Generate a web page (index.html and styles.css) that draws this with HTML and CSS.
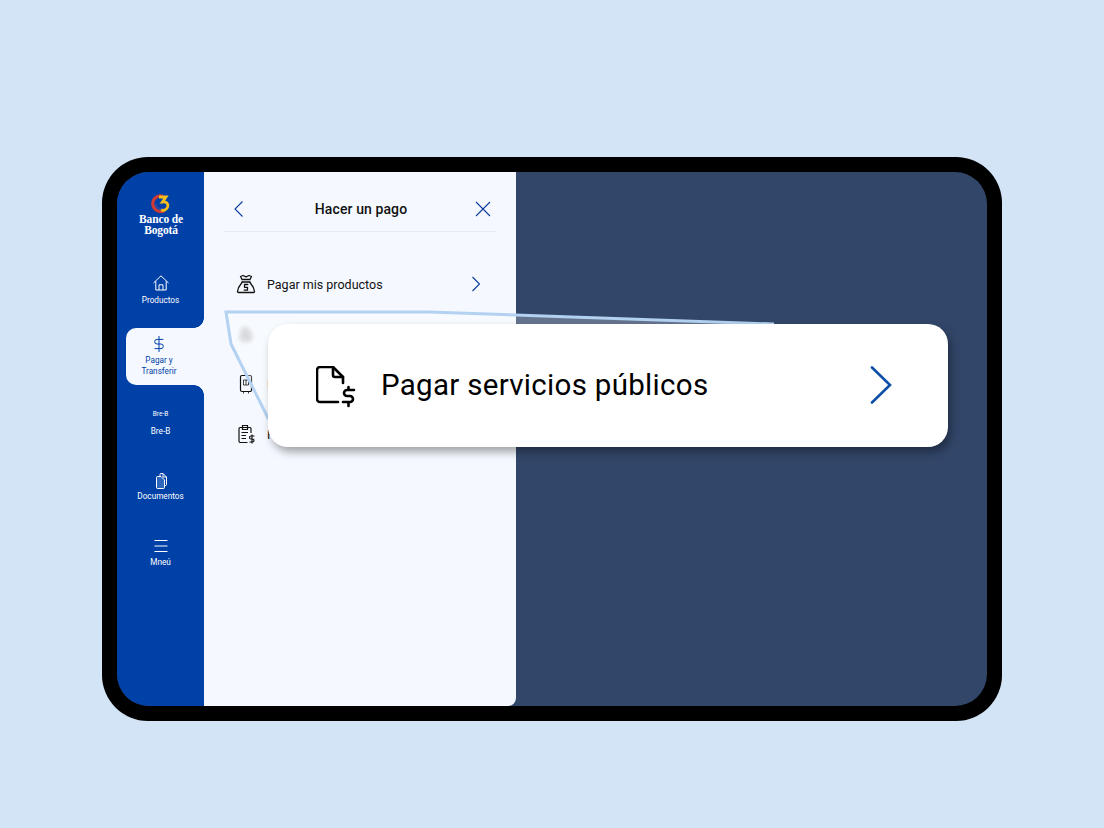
FILE: index.html
```html
<!DOCTYPE html>
<html lang="es">
<head>
    <meta charset="UTF-8">
    <meta name="viewport" content="width=device-width, initial-scale=1.0">
    <title>Hacer un pago</title>
    <link rel="stylesheet" href="styles.css">
</head>
<body>
    <div class="device">
        <div class="screen">
            <!-- Sidebar -->
            <aside class="sidebar">
                <div class="logo">
                    <svg width="20" height="20" viewBox="0 0 20 20" fill="none">
                        <path d="M12 2.2C6.500 0.800 1.800 4.500 1.800 9.500C1.800 14.800 7 18.800 13 17" stroke="#cf3a34" stroke-width="3.2"/>
                        <path d="M4.500 10C5 14 9 16.500 14 14.500" stroke="#2b4aa0" stroke-width="2.4"/>
                        <path d="M8 3H15L11.500 8C15 7.500 17.500 9.500 16.800 12.500C16 16 12.500 17 10 16" stroke="#f4bd1c" stroke-width="2.800"/>
                    </svg>
                    <div class="logo-text">Banco de<br>Bogotá</div>
                </div>
                <nav class="nav">
                    <a class="nav-item first">
                        <svg class="nav-icon" viewBox="0 0 18 18" fill="none" stroke="currentColor" stroke-width="1">
                            <path d="M1.500 9 9 1.800 16.500 9M3.800 7.200V16H14.200V7.200M7 16V10.800H11V16"/>
                        </svg>
                        <span class="nav-label">Productos</span>
                    </a>
                    <a class="nav-item active">
                        <svg class="nav-icon" viewBox="0 0 18 18" fill="none" stroke="currentColor" stroke-width="1">
                            <path d="M13.400 4.400H7A2.300 2.300 0 0 0 7 9H11A2.300 2.300 0 0 1 11 13.600H4.600M9 1V17"/>
                        </svg>
                        <span class="nav-label">Pagar y<br>Transferir</span>
                    </a>
                    <a class="nav-item">
                        <span class="bre-mark">Bre-B</span>
                        <span class="nav-label">Bre-B</span>
                    </a>
                    <a class="nav-item far docs">
                        <svg class="nav-icon" viewBox="0 0 18 18" fill="none" stroke="currentColor" stroke-width="1">
                            <path d="M8 4V2.500A1 1 0 0 1 9 1.500H11L14.500 5V12.500A1 1 0 0 1 13.500 13.500H12.500M11 1.500V5H14.500"/>
                            <path d="M5.500 4.500H9L12.500 8V15.500A1 1 0 0 1 11.500 16.500H5.500A1 1 0 0 1 4.500 15.500V5.500A1 1 0 0 1 5.500 4.500Z" fill="#2f66bd"/>
                        </svg>
                        <span class="nav-label">Documentos</span>
                    </a>
                    <a class="nav-item far">
                        <svg class="nav-icon" viewBox="0 0 18 18" fill="none" stroke="currentColor" stroke-width="1">
                            <path d="M2.500 3.500H15.500M2.500 9H15.500M2.500 14.500H15.500"/>
                        </svg>
                        <span class="nav-label">Mneú</span>
                    </a>
                </nav>
            </aside>

            <!-- Payment panel -->
            <section class="panel">
                <header class="panel-header">
                    <svg class="head-icon" viewBox="0 0 16 16" fill="none" stroke="#0b3c9c" stroke-width="1.100">
                        <path d="M11.500 0.500 4 8 11.500 15.500"/>
                    </svg>
                    <h2>Hacer un pago</h2>
                    <svg class="head-icon" viewBox="0 0 16 16" fill="none" stroke="#0b3c9c" stroke-width="1.100">
                        <path d="M1 1 15 15M15 1 1 15"/>
                    </svg>
                </header>
                <ul class="pay-list">
                    <li class="pay-row">
                        <svg class="pay-icon" viewBox="0 0 20 20" fill="none" stroke="#111" stroke-width="1.300" stroke-linejoin="round">
                            <path d="M4.500 2.500 7 1.500 10 2.800 13 1.500 15.500 2.500 14 5.500H6ZM5.500 5.500H14.500M5.500 8H14.500"/>
                            <path d="M6.500 8C4.500 10.500 2 12.500 1.500 17.500C1.500 18 2 18.500 2.500 18.500H17.500C18 18.500 18.500 18 18.500 17.500C18 12.500 15.500 10.500 13.500 8"/>
                            <path d="M12.300 10.500H8.500V13.300H11.500V16.200H7.700"/>
                        </svg>
                        <span>Pagar mis productos</span>
                        <svg class="row-arrow" viewBox="0 0 10 16" fill="none" stroke="#0b3c9c" stroke-width="1.100">
                            <path d="M1.500 1 8.500 8 1.500 15"/>
                        </svg>
                    </li>
                    <li class="pay-row blurred">
                        <svg class="pay-icon" viewBox="0 0 20 20" fill="#9a9a9a" stroke="none">
                            <path d="M6 3C10 1 14 5 16 10C17.500 14 16 18 12 18H7C3 18 3 14 4 10Z"/>
                        </svg>
                    </li>
                    <li class="pay-row">
                        <svg class="pay-icon" viewBox="0 0 20 20" fill="none" stroke="#111" stroke-width="1.200">
                            <path d="M6 1.500H14A1.500 1.500 0 0 1 15.500 3V16A1.500 1.500 0 0 1 14 17.500H6A1.500 1.500 0 0 1 4.500 16V3A1.500 1.500 0 0 1 6 1.500Z"/>
                            <path d="M7.500 6H12.500V11H7.500ZM10 6V11M7.500 17.500V19.500M12.500 17.500V19.500" stroke-width="0.800"/>
                        </svg>
                        <span>Recargar celular</span>
                    </li>
                    <li class="pay-row">
                        <svg class="pay-icon" viewBox="0 0 20 20" fill="none" stroke="#111" stroke-width="1.200">
                            <path d="M11.500 18.500H4A1.200 1.200 0 0 1 3 17.500V4.500A1.200 1.200 0 0 1 4 3.500H14A1.200 1.200 0 0 1 15 4.500V9"/>
                            <path d="M6.500 1.500H11.500V5.500H6.500ZM5.500 8.500H12M5.500 11.500H10M5.500 14.500H10"/>
                            <path d="M18.500 12H15A1.500 1.500 0 0 0 15 15H16.500A1.500 1.500 0 0 1 16.500 18H13.500M16 10.500V19.500"/>
                        </svg>
                        <span>Pagar impuestos</span>
                    </li>
                </ul>
            </section>

            <div class="backdrop"></div>
        </div>

        <!-- Zoom callout -->
        <svg class="zoom-lines" width="560" height="120" viewBox="0 0 560 120" fill="rgba(255,255,255,0.25)" stroke="#b3d1f0" stroke-width="3">
            <path d="M2 2H205L550 14 44 108 7 34Z"/>
        </svg>
        <div class="callout">
            <svg class="callout-icon" viewBox="0 0 40 42" fill="none" stroke="#000" stroke-width="2.600" stroke-linecap="round" stroke-linejoin="round">
                <path d="M22 36H4A3 3 0 0 1 1 33V4A3 3 0 0 1 4 1H17L27 11V17"/>
                <path d="M17 1V9A2 2 0 0 0 19 11H27"/>
                <path d="M38 24H31A3 3 0 0 0 31 30H34A3 3 0 0 1 34 36H27M32.500 21V24M32.500 36V40"/>
            </svg>
            <span class="callout-text">Pagar servicios públicos</span>
            <svg class="callout-arrow" viewBox="0 0 22 38" fill="none" stroke="#0d4ea6" stroke-width="2.600" stroke-linecap="round">
                <path d="M2 1.500 20 19 2 36.500"/>
            </svg>
        </div>
    </div>
</body>
</html>
```

FILE: styles.css
```css
* {
    margin: 0;
    padding: 0;
    box-sizing: border-box;
}

body {
    font-family: Roboto, "Liberation Sans", sans-serif;
    background-color: #d3e4f6;
    height: 828px;
    overflow: hidden;
    padding: 157px 102px 0;
}

.device {
    position: relative;
    width: 900px;
    height: 564px;
    background: #000;
    border-radius: 46px;
    padding: 15px;
}

.screen {
    display: flex;
    height: 534px;
    border-radius: 32px;
    overflow: hidden;
    background: #324669;
}

/* Sidebar */
.sidebar {
    width: 87px;
    background: #0041a8;
    color: #fff;
    display: flex;
    flex-direction: column;
    flex-shrink: 0;
    padding-top: 22px;
}

.logo {
    display: flex;
    flex-direction: column;
    align-items: center;
    height: 80px;
}

.logo-text {
    font-family: "Liberation Serif", serif;
    font-size: 11.5px;
    font-weight: 700;
    line-height: 11px;
    letter-spacing: -0.15px;
    text-align: center;
    margin-left: 1px;
}

.nav {
    display: flex;
    flex-direction: column;
}

.nav-item {
    position: relative;
    display: flex;
    flex-direction: column;
    align-items: center;
    margin-bottom: 23px;
}

.nav-item.first {
    margin-bottom: 22px;
}

.nav-item.first .nav-label {
    margin-top: 3px;
}

.nav-item.far {
    margin-top: 12px;
}

.nav-item.docs .nav-label {
    margin-top: 1px;
}

.nav-icon {
    width: 18px;
    height: 18px;
    display: block;
}

.nav-label {
    font-size: 8.2px;
    font-weight: 450;
    line-height: 11px;
    margin-top: 2px;
    text-align: center;
}

.nav-item.active {
    margin-left: 9px;
    padding: 7px 12px 8px 0;
    background: #f5f9ff;
    color: #0041a8;
    border-radius: 10px 0 0 10px;
}

/* rounded corners of the blue bar against the panel */
.nav-item.active::before,
.nav-item.active::after {
    content: "";
    position: absolute;
    right: 0;
    width: 10px;
    height: 10px;
}

.nav-item.active::before {
    top: -10px;
    background: radial-gradient(circle at 0 0, #0041a8 9.5px, #f5f9ff 10px);
}

.nav-item.active::after {
    bottom: -10px;
    background: radial-gradient(circle at 0 100%, #0041a8 9.5px, #f5f9ff 10px);
}

.bre-mark {
    font-size: 6.5px;
    line-height: 10px;
    margin-top: 1px;
    margin-bottom: 5px;
}

/* Panel */
.panel {
    width: 312px;
    background: #f5f9ff;
    border-radius: 0 0 8px 0;
    padding: 0 20px;
    flex-shrink: 0;
}

.panel-header {
    display: flex;
    justify-content: space-between;
    align-items: center;
    height: 60px;
    padding: 15px 5px 0 7px;
    border-bottom: 1px solid #e6ebf1;
}

.panel-header h2 {
    font-size: 14px;
    font-weight: 500;
    color: #111;
    letter-spacing: 0.1px;
}

.head-icon {
    width: 16px;
    height: 16px;
}

.pay-list {
    list-style: none;
    margin-top: 27px;
}

.pay-row {
    display: flex;
    align-items: center;
    gap: 11px;
    height: 50px;
    padding-left: 12px;
    font-size: 12.5px;
    color: #111;
}

.pay-row span {
    flex: 1;
}

.pay-icon {
    width: 20px;
    height: 20px;
    flex-shrink: 0;
}

.row-arrow {
    width: 10px;
    height: 16px;
    margin-right: 15px;
}

.blurred {
    filter: blur(2px);
    opacity: 0.45;
}

.backdrop {
    flex: 1;
}

/* Callout */
.zoom-lines {
    position: absolute;
    left: 122px;
    top: 153px;
}

.callout {
    position: absolute;
    left: 166px;
    top: 167px;
    width: 680px;
    height: 123px;
    background: #fff;
    border-radius: 20px;
    box-shadow: 3px 5px 8px rgba(0, 0, 0, 0.35);
    display: flex;
    align-items: center;
    padding: 0 56px 2px 48px;
}

.callout-icon {
    width: 40px;
    height: 42px;
    flex-shrink: 0;
    margin-top: 4px;
}

.callout-text {
    flex: 1;
    font-size: 29.5px;
    color: #000;
    margin-left: 25px;
    letter-spacing: 0.3px;
}

.callout-arrow {
    width: 22px;
    height: 38px;
}
```
